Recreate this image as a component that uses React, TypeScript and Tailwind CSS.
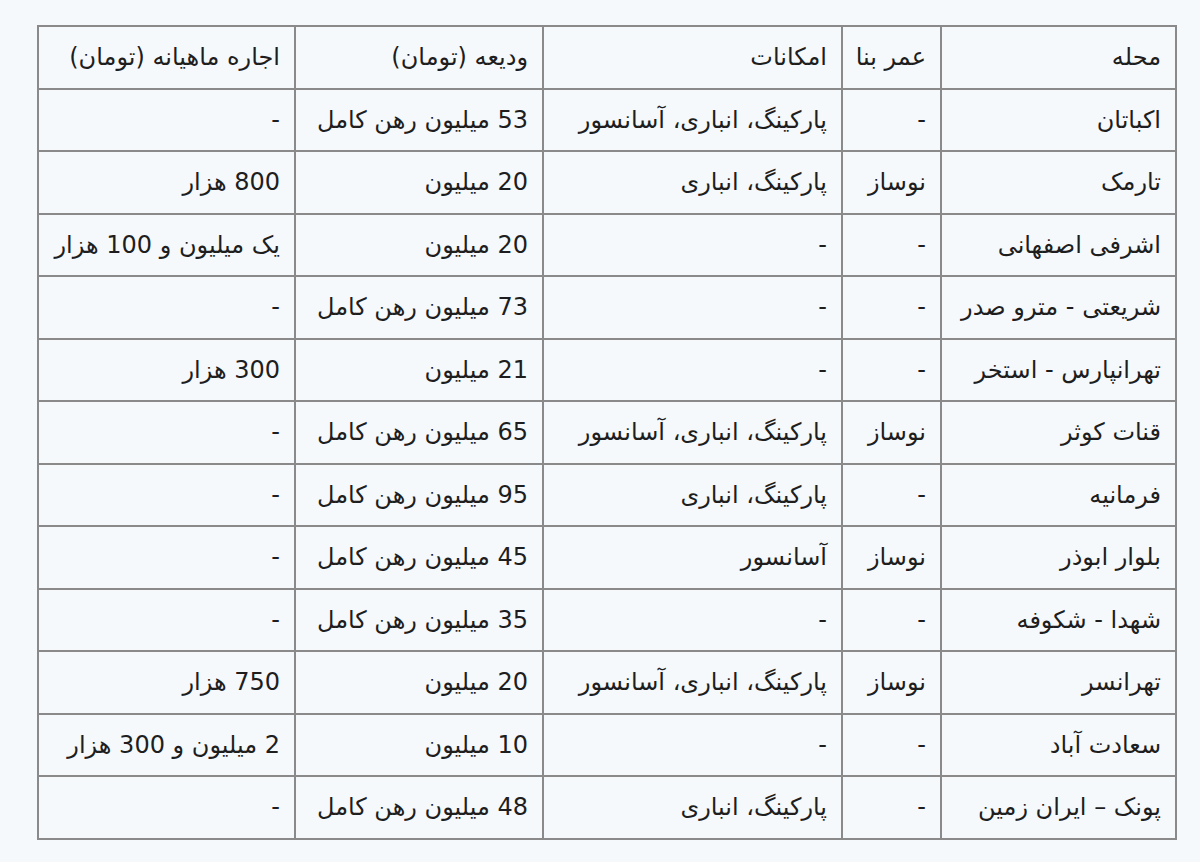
import React from 'react'

const headers = ['محله', 'عمر بنا', 'امکانات', 'ودیعه (تومان)', 'اجاره ماهیانه (تومان)']

const rows: string[][] = [
  ['اکباتان', '-', 'پارکینگ، انباری، آسانسور', '53 میلیون رهن کامل', '-'],
  ['تارمک', 'نوساز', 'پارکینگ، انباری', '20 میلیون', '800 هزار'],
  ['اشرفی اصفهانی', '-', '-', '20 میلیون', 'یک میلیون و 100 هزار'],
  ['شریعتی - مترو صدر', '-', '-', '73 میلیون رهن کامل', '-'],
  ['تهرانپارس - استخر', '-', '-', '21 میلیون', '300 هزار'],
  ['قنات کوثر', 'نوساز', 'پارکینگ، انباری، آسانسور', '65 میلیون رهن کامل', '-'],
  ['فرمانیه', '-', 'پارکینگ، انباری', '95 میلیون رهن کامل', '-'],
  ['بلوار ابوذر', 'نوساز', 'آسانسور', '45 میلیون رهن کامل', '-'],
  ['شهدا - شکوفه', '-', '-', '35 میلیون رهن کامل', '-'],
  ['تهرانسر', 'نوساز', 'پارکینگ، انباری، آسانسور', '20 میلیون', '750 هزار'],
  ['سعادت آباد', '-', '-', '10 میلیون', '2 میلیون و 300 هزار'],
  ['پونک – ایران زمین', '-', 'پارکینگ، انباری', '48 میلیون رهن کامل', '-'],
]

const cell = 'border-2 border-[#8a8a8a] px-[14px] text-right align-middle h-[62.5px] whitespace-nowrap'

export default function App() {
  return (
    <div className="min-h-[862px] w-[1200px] bg-[#f6f9fc] pt-[25px] pl-[37px]" style={{ fontFamily: '"DejaVu Sans", Tahoma, sans-serif' }}>
      <table dir="rtl" className="w-[1138px] table-fixed border-collapse text-[24px] leading-none text-[#1e1e1e]">
        <colgroup>
          <col className="w-[235px]" />
          <col className="w-[99px]" />
          <col className="w-[299px]" />
          <col className="w-[248px]" />
          <col className="w-[257px]" />
        </colgroup>
        <thead>
          <tr>
            {headers.map((h) => (
              <th key={h} className={`${cell} font-normal`}>{h}</th>
            ))}
          </tr>
        </thead>
        <tbody>
          {rows.map((r, i) => (
            <tr key={i}>
              {r.map((c, j) => (
                <td key={j} className={cell}>{c}</td>
              ))}
            </tr>
          ))}
        </tbody>
      </table>
    </div>
  )
}
